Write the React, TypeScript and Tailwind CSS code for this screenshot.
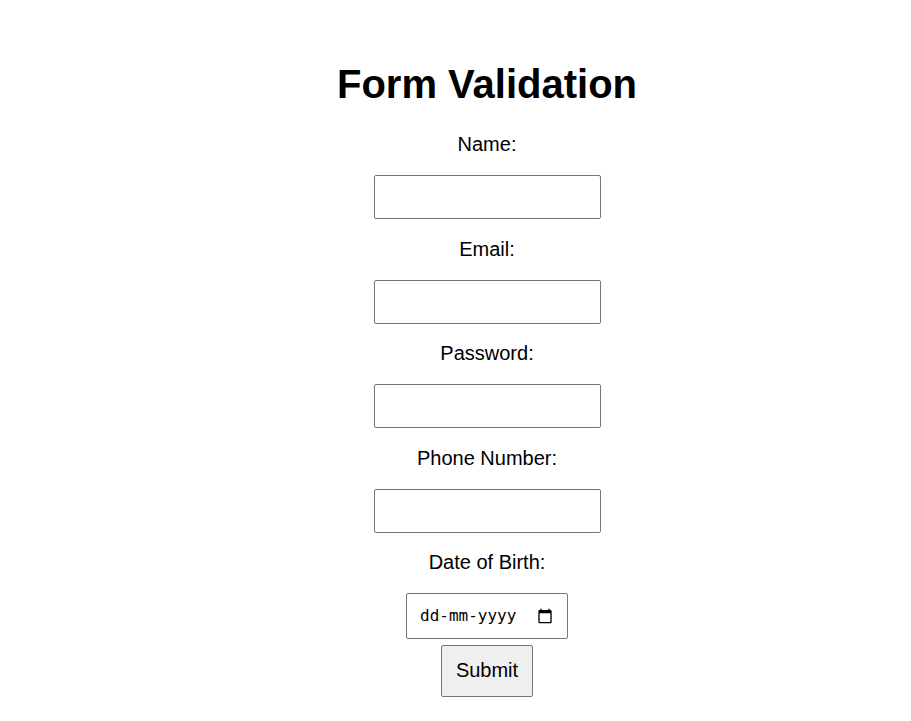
import React from "react";

const fields = ["Name:", "Email:", "Password:", "Phone Number:"];

export default function App() {
  return (
    <main className="flex h-[721px] w-[911px] flex-col items-center overflow-hidden bg-white pl-[63px] pt-[60px] font-['Liberation_Sans',Arial,sans-serif] text-[20px] text-black">
      <h1 className="h-[72px] text-[40px] font-bold leading-[48px]">Form Validation</h1>
      <form className="flex flex-col items-center">
        {fields.map((label) => (
          <div key={label} className="flex h-[104.6px] flex-col items-center">
            <label className="h-[43px] leading-[24px]">{label}</label>
            <input aria-label={label} className="h-[44px] w-[227px] rounded-[2px] border border-[#767676] px-3" />
          </div>
        ))}
        <label className="h-[43px] leading-[24px]">Date of Birth:</label>
        <div className="flex h-[46px] w-[162px] items-center justify-between rounded-[2px] border border-[#767676] pl-[13px] pr-[13.6px]">
          <span className="font-['DejaVu_Sans_Mono',monospace] text-[16px]">dd-mm-yyyy</span>
          <svg className="-mt-px" width="16" height="16" viewBox="0 0 24 24" fill="black">
            <path d="M20 3h-1V1h-2v2H7V1H5v2H4c-1.1 0-2 .9-2 2v16c0 1.1.9 2 2 2h16c1.1 0 2-.9 2-2V5c0-1.1-.9-2-2-2zm0 18H4V8h16v13z" />
          </svg>
        </div>
        <button type="button" className="mt-[6px] h-[52px] w-[92px] rounded-[2px] border border-[#767676] bg-[#efefef] pb-[2px]">Submit</button>
      </form>
    </main>
  );
}
